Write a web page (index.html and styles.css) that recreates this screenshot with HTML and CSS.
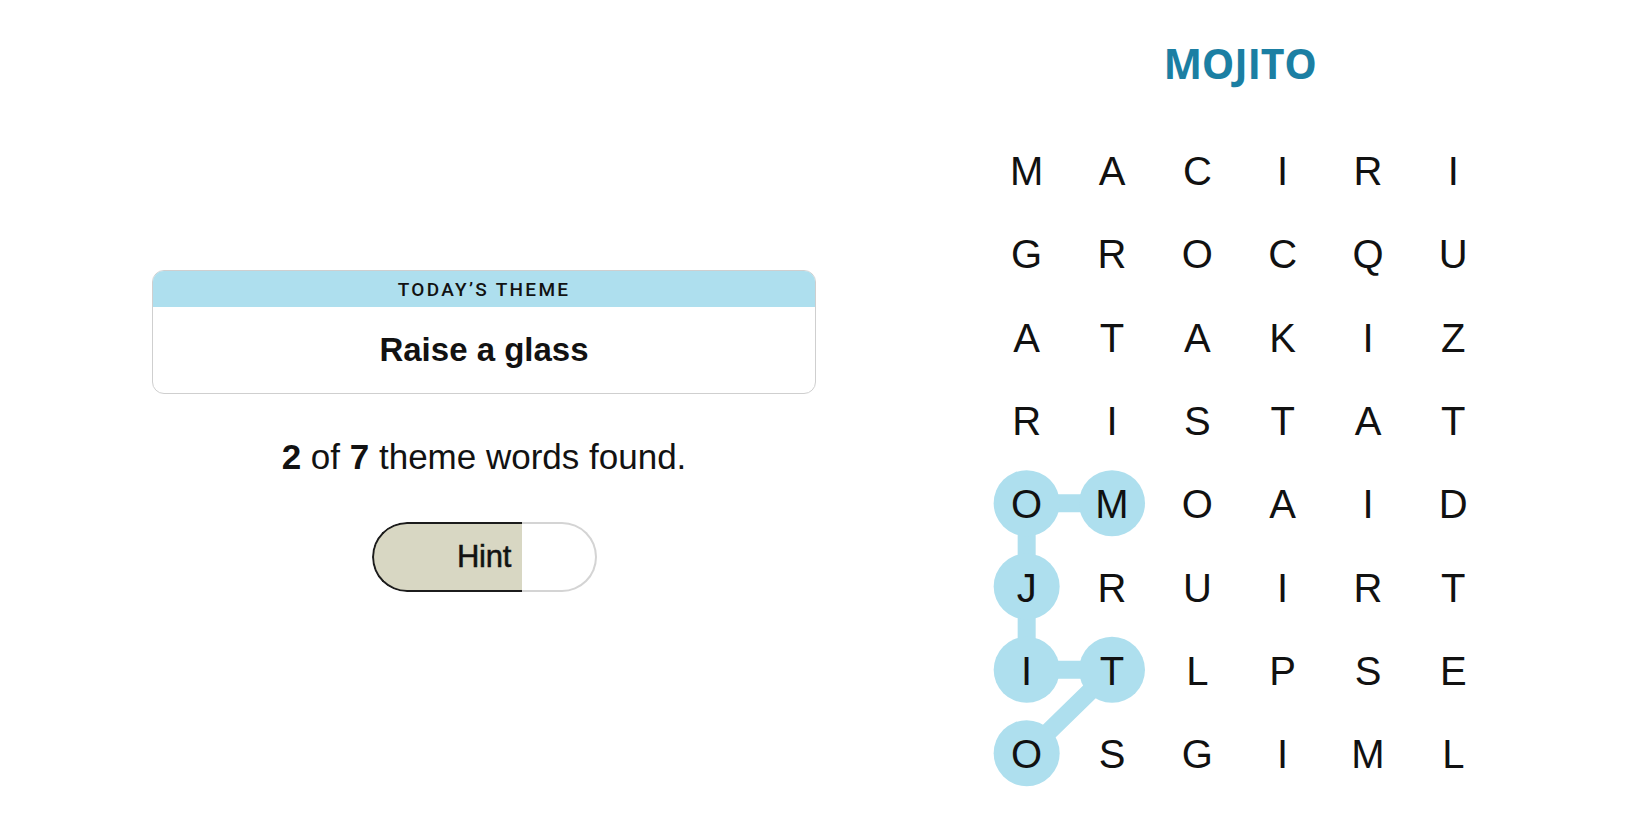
FILE: index.html
```html
<!DOCTYPE html>
<html lang="en">
<head>
<meta charset="utf-8">
<title>Strands</title>
<link rel="stylesheet" href="styles.css">
</head>
<body>
<main class="page">
  <section class="left">
    <div class="theme-card">
      <div class="theme-head">TODAY’S THEME</div>
      <div class="theme-body">Raise a glass</div>
    </div>
    <p class="found"><b>2</b> of <b>7</b> theme words found.</p>
    <button class="hint">
      <span class="hint-fill"></span>
      <span class="hint-label">Hint</span>
    </button>
  </section>
  <section class="right">
    <h1 class="word">MOJITO</h1>
    <div class="board">
      <svg class="trail" viewBox="0 0 512 666.67" width="512" height="667">
        <g stroke="#aedfee" stroke-width="18" stroke-linecap="round">
          <line x1="42.67" y1="375" x2="128" y2="375"/>
          <line x1="42.67" y1="375" x2="42.67" y2="541.67"/>
          <line x1="42.67" y1="541.67" x2="128" y2="541.67"/>
          <line x1="128" y1="541.67" x2="42.67" y2="625"/>
        </g>
        <g fill="#aedfee">
          <circle cx="42.67" cy="375" r="33"/>
          <circle cx="128" cy="375" r="33"/>
          <circle cx="42.67" cy="458.33" r="33"/>
          <circle cx="42.67" cy="541.67" r="33"/>
          <circle cx="128" cy="541.67" r="33"/>
          <circle cx="42.67" cy="625" r="33"/>
        </g>
      </svg>
      <div class="grid">
        <span>M</span><span>A</span><span>C</span><span>I</span><span>R</span><span>I</span>
        <span>G</span><span>R</span><span>O</span><span>C</span><span>Q</span><span>U</span>
        <span>A</span><span>T</span><span>A</span><span>K</span><span>I</span><span>Z</span>
        <span>R</span><span>I</span><span>S</span><span>T</span><span>A</span><span>T</span>
        <span>O</span><span>M</span><span>O</span><span>A</span><span>I</span><span>D</span>
        <span>J</span><span>R</span><span>U</span><span>I</span><span>R</span><span>T</span>
        <span>I</span><span>T</span><span>L</span><span>P</span><span>S</span><span>E</span>
        <span>O</span><span>S</span><span>G</span><span>I</span><span>M</span><span>L</span>
      </div>
    </div>
  </section>
</main>
</body>
</html>
```
FILE: styles.css
```css
* { box-sizing: border-box; }
html, body {
  margin: 0;
  padding: 0;
  background: #fff;
  color: #121212;
  font-family: "Liberation Sans", Arial, sans-serif;
}
.page {
  display: flex;
  align-items: flex-start;
  width: 1650px;
  height: 825px;
  padding-left: 152px;
  gap: 168px;
  overflow: hidden;
}
.left {
  width: 664px;
  padding-top: 270px;
  display: flex;
  flex-direction: column;
  align-items: center;
}
.theme-card {
  width: 664px;
  height: 124px;
  border: 1px solid #cfcfcf;
  border-radius: 12px;
  overflow: hidden;
  display: flex;
  flex-direction: column;
}
.theme-head {
  height: 36px;
  background: #aedfee;
  display: flex;
  align-items: center;
  justify-content: center;
  font-family: Roboto, "Liberation Sans", sans-serif;
  font-weight: 500;
  font-size: 19px;
  letter-spacing: 2.3px;
  color: #121212;
}
.theme-body {
  flex: 1;
  display: flex;
  align-items: center;
  justify-content: center;
  font-weight: 700;
  font-size: 33px;
  color: #121212;
}
.found {
  margin: 43px 0 0;
  font-size: 35px;
  line-height: 40px;
  color: #121212;
}
.found b { font-weight: 700; }
.hint {
  position: relative;
  margin-top: 45px;
  width: 225px;
  height: 70px;
  border: none;
  border-radius: 35px;
  background: #fff;
  box-shadow: inset 0 0 0 2px #d4d4d4;
  overflow: hidden;
  padding: 0;
  font-family: "Liberation Sans", Arial, sans-serif;
  cursor: pointer;
}
.hint-fill {
  position: absolute;
  left: 0;
  top: 0;
  bottom: 0;
  width: 150px;
  background: #d8d7c3;
  border: 2px solid #1c1c1c;
  border-right: none;
  border-radius: 35px 0 0 35px;
}
.hint-label {
  position: relative;
  font-size: 31px;
  color: #121212;
  letter-spacing: -0.3px;
  -webkit-text-stroke: 0.5px #121212;
}
.right {
  width: 512px;
  display: flex;
  flex-direction: column;
  align-items: center;
}
.word {
  margin: 38px 0 0;
  height: 50px;
  line-height: 50px;
  font-family: "Open Sans", "Liberation Sans", sans-serif;
  font-weight: 700;
  font-size: 41px;
  color: #1b7fa3;
  letter-spacing: -0.3px;
}
.board {
  position: relative;
  margin-top: 40px;
  width: 512px;
  height: 667px;
}
.trail {
  position: absolute;
  left: 0;
  top: 0;
}
.grid {
  position: relative;
  display: grid;
  grid-template-columns: repeat(6, 85.333px);
  grid-template-rows: repeat(8, 83.333px);
}
.grid span {
  display: flex;
  align-items: center;
  justify-content: center;
  padding-top: 4px;
  font-size: 40px;
  color: #111;
}
```
